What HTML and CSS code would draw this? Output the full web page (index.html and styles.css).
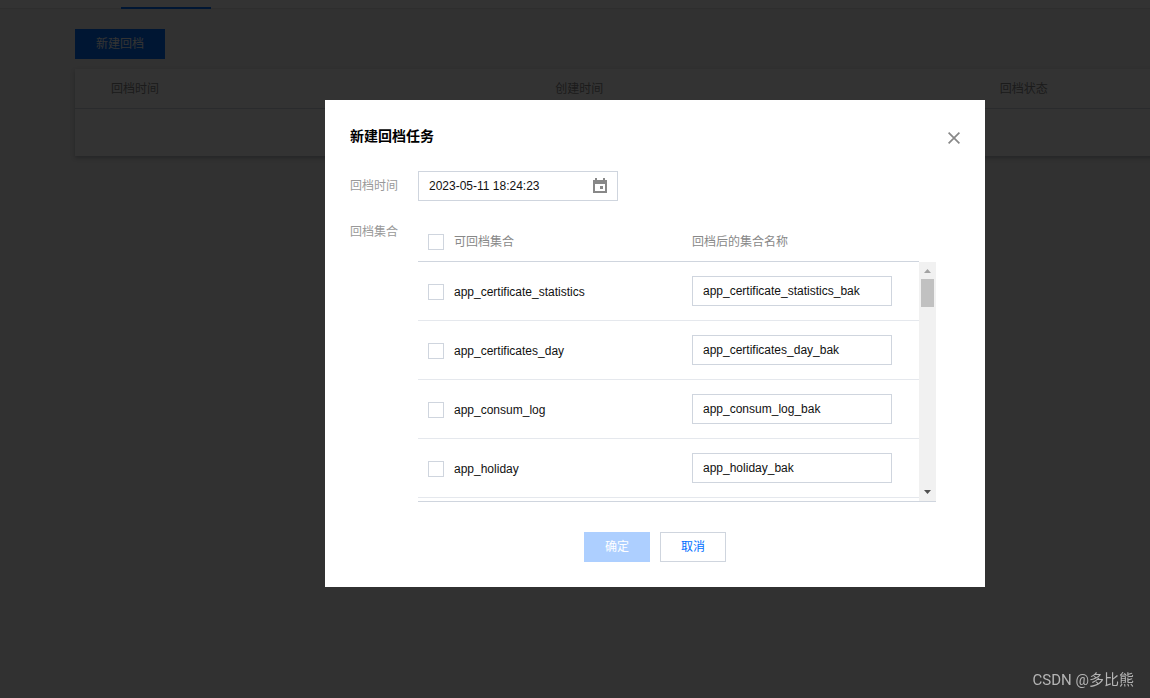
FILE: index.html
```html
<!DOCTYPE html>
<html lang="zh-CN">
<head>
<meta charset="utf-8">
<meta name="viewport" content="width=device-width, initial-scale=1">
<title>新建回档任务</title>
<link rel="stylesheet" href="styles.css">
</head>
<body>
<div class="page">
  <div class="tabs"><div class="tab-active"></div></div>
  <main class="content">
    <button class="btn btn-primary" type="button">新建回档</button>
    <table class="record-table">
      <thead><tr><th>回档时间</th><th>创建时间</th><th>回档状态</th></tr></thead>
      <tbody><tr><td></td><td></td><td></td></tr></tbody>
    </table>
  </main>
</div>

<div class="overlay">
  <section class="dialog" role="dialog" aria-modal="true" aria-labelledby="dialog-title">
    <header class="dialog-head">
      <h1 class="dialog-title" id="dialog-title">新建回档任务</h1>
      <button class="close" type="button" aria-label="关闭">
        <svg width="12" height="12" viewBox="0 0 12 12"><path d="M.6 .6l10.800 10.800M11.400 .6L.6 11.400" stroke="#888" stroke-width="1.700" fill="none"/></svg>
      </button>
    </header>

    <div class="form">
      <label class="form-label" for="time">回档时间</label>
      <div class="date-box">
        <input class="date-input" id="time" type="text" value="2023-05-11 18:24:23">
        <svg class="date-icon" width="14" height="16" viewBox="0 0 14 16"><path fill="#888" fill-rule="evenodd" d="M2 0h2v2h6V0h2v2h2v13H0V2h2zM2 6v7h10V6zM7 8h3v3H7z"/></svg>
      </div>

      <span class="form-label" id="sets-label">回档集合</span>
      <div class="sets">
        <table class="sets-table" aria-labelledby="sets-label">
          <thead>
            <tr><th><label class="check"><input type="checkbox">可回档集合</label></th><th>回档后的集合名称</th></tr>
          </thead>
          <tbody>
            <tr><td><label class="check"><input type="checkbox">app_certificate_statistics</label></td><td><input class="text" type="text" aria-label="app_certificate_statistics" value="app_certificate_statistics_bak"></td></tr>
            <tr><td><label class="check"><input type="checkbox">app_certificates_day</label></td><td><input class="text" type="text" aria-label="app_certificates_day" value="app_certificates_day_bak"></td></tr>
            <tr><td><label class="check"><input type="checkbox">app_consum_log</label></td><td><input class="text" type="text" aria-label="app_consum_log" value="app_consum_log_bak"></td></tr>
            <tr><td><label class="check"><input type="checkbox">app_holiday</label></td><td><input class="text" type="text" aria-label="app_holiday" value="app_holiday_bak"></td></tr>
          </tbody>
        </table>
        <div class="scrollbar" aria-hidden="true">
          <svg class="arrow" width="17" height="17" viewBox="0 0 17 17"><path fill="#a3a3a3" d="M5 11h7L8.5 7z"/></svg>
          <div class="thumb"></div>
          <svg class="arrow arrow-down" width="17" height="17" viewBox="0 0 17 17"><path fill="#505050" d="M5 6h7l-3.500 4z"/></svg>
        </div>
      </div>
    </div>

    <footer class="dialog-foot">
      <button class="btn btn-disabled" type="button" disabled>确定</button>
      <button class="btn btn-plain" type="button">取消</button>
    </footer>
  </section>
</div>
<div class="watermark">CSDN @多比熊</div>
</body>
</html>
```
FILE: styles.css
```css
* { box-sizing: border-box; }

body {
  margin: 0;
  color: #111;
  font: 12px/18px "Liberation Sans", "Noto Sans CJK SC", sans-serif;
}

button, input { font: inherit; color: inherit; margin: 0; }

table { border-collapse: separate; border-spacing: 0; }

th { font-weight: normal; text-align: left; }

/* page behind the dialog */
.page { min-height: 100vh; overflow: hidden; background: #f2f2f2; }

.tabs {
  height: 9px;
  padding-left: 121px;
  background: #fff;
  border-bottom: 1px solid #e5e5e5;
}

.tab-active { width: 90px; height: 9px; border-bottom: 2px solid #006eff; }

.content { padding: 20px 0 0 75px; }

.record-table {
  width: 1333px;
  margin-top: 10px;
  table-layout: fixed;
  background: #fff;
  box-shadow: 0 2px 4px rgba(54, 58, 80, .32);
}

.record-table th {
  height: 40px;
  padding: 0 36px;
  color: #888;
  border-bottom: 1px solid #cfd5de;
}

.record-table td { height: 47px; }

.btn {
  height: 30px;
  padding: 0 20px;
  border: 1px solid transparent;
  display: inline-flex;
  align-items: center;
  justify-content: center;
}

.btn-primary { display: flex; width: 90px; background: #006eff; color: #fff; }
.btn-disabled { width: 66px; background: #adcfff; color: #fff; }
.btn-plain { width: 66px; background: #fff; color: #006eff; border-color: #cfd5de; }

/* dialog */
.overlay {
  position: fixed;
  inset: 0;
  display: flex;
  justify-content: center;
  align-items: flex-start;
  padding: 100px 0 0 160px;
  background: rgba(0, 0, 0, .8);
}

.dialog { width: 660px; padding: 25px; background: #fff; }

.dialog-head { display: flex; justify-content: space-between; height: 26px; }

.dialog-title { margin: 0; font-size: 14px; line-height: 22px; font-weight: bold; color: #000; }

.close {
  display: flex;
  align-items: center;
  justify-content: center;
  width: 12px;
  height: 26px;
  padding: 0;
  border: 0;
  background: none;
}

.form {
  display: grid;
  grid-template-columns: 48px 518px;
  gap: 20px;
  padding-top: 20px;
}

.form-label { color: #999; line-height: 22px; }
label.form-label { line-height: 30px; }

.date-box {
  display: flex;
  align-items: center;
  width: 200px;
  height: 30px;
  padding: 0 10px;
  border: 1px solid #cfd5de;
}

.date-input { flex: 1; min-width: 0; padding: 0; border: 0; background: none; outline: 0; }
.date-icon { flex: none; }

.sets { display: flex; border-bottom: 1px solid #cfd5de; }

.sets-table { flex: 1; margin-bottom: 3px; table-layout: fixed; }

.sets-table th {
  height: 41px;
  padding: 2px 10px 0;
  color: #888;
  border-bottom: 1px solid #cfd5de;
}

.sets-table td { height: 59px; padding: 0 10px; border-bottom: 1px solid #e5e8ed; }

.sets-table th:first-child { width: 264px; }

.sets-table td:first-child { padding-top: 2px; }

.check { display: flex; align-items: center; gap: 10px; }

.check input {
  appearance: none;
  width: 16px;
  height: 16px;
  border: 1px solid #cfd5de;
  background: #fff;
}

.text {
  display: block;
  width: 200px;
  height: 30px;
  padding: 0 10px;
  border: 1px solid #cfd5de;
  background: #fff;
}

.scrollbar { display: flex; flex-direction: column; width: 17px; margin-top: 41px; background: #f1f1f1; }
.arrow { display: block; }
.arrow-down { margin-top: auto; }
.thumb { height: 28px; margin: 0 2px; background: #c1c1c1; }

.dialog-foot { display: flex; justify-content: center; gap: 10px; padding-top: 30px; }

.watermark {
  position: fixed;
  right: 16px;
  bottom: 8px;
  color: #b4b4b4;
  font: 15px/20px Roboto, "Noto Sans CJK SC", sans-serif;
}
```
